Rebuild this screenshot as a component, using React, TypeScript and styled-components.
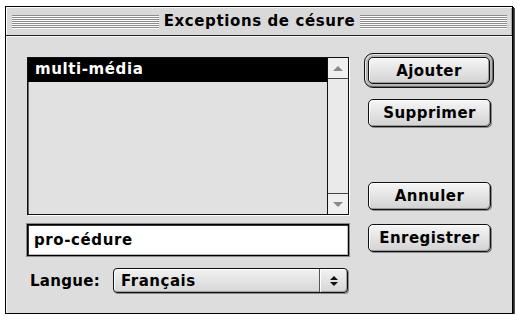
import React from 'react';
import styled, { createGlobalStyle } from 'styled-components';

const GlobalStyle = createGlobalStyle`
  html, body {
    margin: 0;
    padding: 0;
    background: #ffffff;
  }
  * {
    box-sizing: border-box;
  }
`;

const font = `"DejaVu Sans", "Liberation Sans", sans-serif`;

const App = () => {
  return (
    <>
      <GlobalStyle />
      <Window>
        <TitleBar>
          <Stripes />
          <Title>Exceptions de césure</Title>
          <Stripes />
        </TitleBar>

        <Content>
          <LeftColumn>
            <ListBox>
              <ListBody>
                <ListRow selected>multi-média</ListRow>
              </ListBody>
              <ScrollBar>
                <ScrollArrow position="top">
                  <Triangle direction="up" />
                </ScrollArrow>
                <ScrollTrack />
                <ScrollArrow position="bottom">
                  <Triangle direction="down" />
                </ScrollArrow>
              </ScrollBar>
            </ListBox>

            <TextField>pro-cédure</TextField>

            <LanguageRow>
              <Label>Langue:</Label>
              <PopupMenu>
                <PopupValue>Français</PopupValue>
                <PopupArrows>
                  <Triangle direction="up" dark />
                  <Triangle direction="down" dark />
                </PopupArrows>
              </PopupMenu>
            </LanguageRow>
          </LeftColumn>

          <RightColumn>
            <DefaultRing>
              <Button>Ajouter</Button>
            </DefaultRing>
            <Button indent spacing={11}>Supprimer</Button>
            <Button indent spacing={55}>Annuler</Button>
            <Button indent spacing={14}>Enregistrer</Button>
          </RightColumn>
        </Content>
      </Window>
    </>
  );
};

const Window = styled.div`
  margin: 6px 0 0 5px;
  width: 508px;
  height: 308px;
  border: 1px solid #000;
  box-shadow: 1px 1px 0 #222, 2px 2px 0 #555;
  background: #dddddd;
  display: flex;
  flex-direction: column;
  font-family: ${font};
`;

const TitleBar = styled.div`
  height: 29px;
  display: flex;
  align-items: center;
  gap: 3px;
  padding: 0 5px 0 6px;
  background: #d9d9d9;
  border-bottom: 1px solid #222;
  box-shadow: inset 1px 1px 0 #ffffff, inset -1px 0 0 #a8a8a8;
`;

const Stripes = styled.div`
  flex: 1;
  height: 14px;
  margin-top: 1px;
  background: repeating-linear-gradient(
    to bottom,
    #8c8c8c 0px,
    #8c8c8c 1px,
    #fbfbfb 1px,
    #fbfbfb 2px
  );
`;

const Title = styled.div`
  font-size: 15px;
  font-weight: bold;
  letter-spacing: 0.6px;
  color: #000;
  padding: 0 2px;
  white-space: nowrap;
`;

const Content = styled.div`
  flex: 1;
  display: flex;
  gap: 15px;
  padding: 16px 0 0 20px;
  border-top: 1px solid #f6f6f6;
  border-left: 1px solid #f6f6f6;
`;

const LeftColumn = styled.div`
  width: 322px;
  padding-top: 4px;
  display: flex;
  flex-direction: column;
`;

const ListBox = styled.div`
  height: 158px;
  display: flex;
  border: 1px solid #111;
  box-shadow: 1px 1px 0 #ffffff;
`;

const ListBody = styled.div`
  flex: 1;
  background: #e1e1e1;
  box-shadow: inset 1px 0 0 #666;
`;

const ListRow = styled.div<{ selected?: boolean }>`
  height: 24px;
  line-height: 23px;
  padding-left: 7px;
  font-size: 15px;
  font-weight: bold;
  letter-spacing: 0.6px;
  background: ${(p) => (p.selected ? '#000' : 'transparent')};
  color: ${(p) => (p.selected ? '#fff' : '#000')};
`;

const ScrollBar = styled.div`
  width: 21px;
  display: flex;
  flex-direction: column;
  border-left: 1px solid #111;
  background: #eeeeee;
`;

const ScrollArrow = styled.div<{ position: 'top' | 'bottom' }>`
  height: 21px;
  display: flex;
  align-items: center;
  justify-content: center;
  background: #efefef;
  ${(p) => (p.position === 'top' ? 'border-bottom: 1px solid #444;' : 'border-top: 1px solid #444;')}
`;

const ScrollTrack = styled.div`
  flex: 1;
  background: #eaeaea;
`;

const Triangle = styled.div<{ direction: 'up' | 'down'; dark?: boolean }>`
  width: 0;
  height: 0;
  border-left: ${(p) => (p.dark ? 4 : 5)}px solid transparent;
  border-right: ${(p) => (p.dark ? 4 : 5)}px solid transparent;
  ${(p) =>
    p.direction === 'up'
      ? `border-bottom: ${p.dark ? 4 : 5}px solid ${p.dark ? '#111' : '#8a8a8a'};`
      : `border-top: ${p.dark ? 4 : 5}px solid ${p.dark ? '#111' : '#8a8a8a'};`}
`;

const TextField = styled.div`
  margin-top: 9px;
  height: 32px;
  padding-left: 6px;
  display: flex;
  align-items: center;
  background: #ffffff;
  border: 1px solid #000;
  box-shadow: inset 1px 1px 0 #333, inset -1px -1px 0 #bbb, 0 0 0 1px #8a8a8a;
  font-size: 15px;
  font-weight: bold;
  letter-spacing: 0.6px;
  color: #000;
`;

const LanguageRow = styled.div`
  margin-top: 12px;
  display: flex;
  align-items: center;
`;

const Label = styled.div`
  width: 86px;
  padding-left: 3px;
  font-size: 15px;
  font-weight: bold;
  letter-spacing: 0.3px;
  color: #000;
`;

const PopupMenu = styled.div`
  width: 235px;
  height: 25px;
  display: flex;
  border: 1px solid #111;
  border-radius: 4px;
  background: linear-gradient(#f2f2f2, #d6d6d6);
  box-shadow: inset 1px 1px 0 #ffffff, inset -1px -1px 0 #a0a0a0, 1px 1px 0 #8a8a8a;
`;

const PopupValue = styled.div`
  flex: 1;
  padding-left: 7px;
  display: flex;
  align-items: center;
  font-size: 15px;
  font-weight: bold;
  letter-spacing: 0.5px;
  color: #000;
`;

const PopupArrows = styled.div`
  width: 28px;
  display: flex;
  flex-direction: column;
  align-items: center;
  justify-content: center;
  gap: 2px;
  border-left: 1px solid #555;
  box-shadow: inset 1px 0 0 #ffffff;
`;

const RightColumn = styled.div`
  width: 130px;
  display: flex;
  flex-direction: column;
`;

const DefaultRing = styled.div`
  height: 35px;
  padding: 3px;
  border: 1px solid #111;
  border-radius: 9px;
  background: #b4b4b4;
  box-shadow: inset 1px 1px 0 #e6e6e6, inset -1px -1px 0 #6a6a6a;
  display: flex;
`;

const Button = styled.div<{ indent?: boolean; spacing?: number }>`
  width: ${(p) => (p.indent ? '123px' : '100%')};
  height: ${(p) => (p.indent ? '28px' : '100%')};
  margin-left: ${(p) => (p.indent ? '4px' : '0')};
  margin-top: ${(p) => p.spacing ?? 0}px;
  display: flex;
  align-items: center;
  justify-content: center;
  border: 1px solid #111;
  border-radius: 5px;
  background: linear-gradient(#f6f6f6, #d2d2d2);
  box-shadow: inset 1px 1px 0 #ffffff, inset -1px -1px 0 #9a9a9a,
    ${(p) => (p.indent ? '1px 1px 0 #8a8a8a' : '0 0 0 transparent')};
  font-size: 15px;
  font-weight: bold;
  letter-spacing: 0.45px;
  color: #000;
`;

export default App;
